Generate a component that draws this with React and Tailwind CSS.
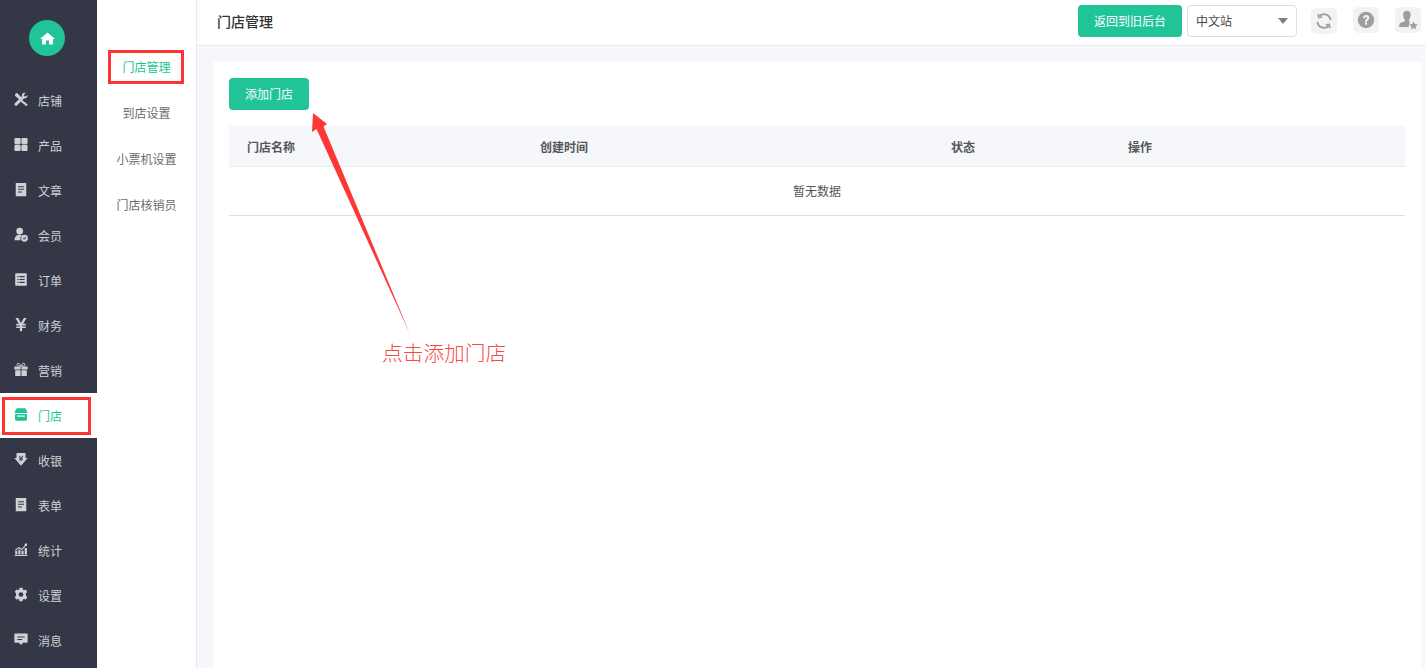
import React from "react";

const F = '"Noto Sans CJK SC", "Liberation Sans", sans-serif';

const S = ({ children }) => (
  <svg width="15" height="15" viewBox="0 0 16 16" fill="currentColor">{children}</svg>
);

const icons = {
  tools: (
    <S>
      <path d="M1.6 1.4 L3.6 .6 L9 6 L6.6 8.4 L1 3.6 Z" />
      <path d="M12 .4 C9.8 .4 8.6 2.2 9.2 4.2 L1 12.2 C.2 13 .3 13.8 1.1 14.6 C1.9 15.4 2.8 15.4 3.6 14.6 L11.6 6.6 C13.7 7.2 15.8 5.6 15.4 2.8 L13 4.9 L11 3.2 L13.2 .7 Z" />
      <path d="M9.2 8.7 L15 13.2 C15.8 14 15.5 14.5 14.9 15 C14.3 15.5 13.8 15.4 13.2 14.8 L7.6 10.3 Z" />
    </S>
  ),
  grid: (
    <S>
      <rect x=".5" y=".5" width="7.1" height="7.1" rx="1.2" />
      <rect x="8.4" y=".5" width="7.1" height="7.1" rx="1.2" />
      <rect x=".5" y="8.4" width="7.1" height="7.1" rx="1.2" />
      <rect x="8.4" y="8.4" width="7.1" height="7.1" rx="1.2" />
    </S>
  ),
  doc: (
    <S>
      <path fillRule="evenodd" d="M2 .6 H14 V15.6 H2 Z M4.6 4.2 V5.3 H11.4 V4.2 Z M4.6 7.2 V8.3 H11.4 V7.2 Z M4.6 10.2 V11.3 H9 V10.2 Z" />
    </S>
  ),
  member: (
    <S>
      <circle cx="6.5" cy="4.2" r="3.8" />
      <path d="M.6 14.6 C.6 10.5 3.2 8.4 6.5 8.4 C7.5 8.4 8.2 8.6 8.9 9 C7.8 10 7.2 11.2 7.2 12.5 C7.2 13.3 7.4 14 7.7 14.6 Z" />
      <path fillRule="evenodd" d="M12 8.4 A3.9 3.9 0 1 0 12 16.2 A3.9 3.9 0 1 0 12 8.4 Z M10.1 12.1 L11.6 14 L14 11 L13.2 10.5 L11.5 12.6 L10.8 11.6 Z" />
    </S>
  ),
  order: (
    <S>
      <path fillRule="evenodd" d="M2.4 .8 H13.6 A1 1 0 0 1 14.6 1.8 V14.2 A1 1 0 0 1 13.6 15.2 H2.4 A1 1 0 0 1 1.4 14.2 V1.8 A1 1 0 0 1 2.4 .8 Z M3.8 4 V5.3 H5.1 V4 Z M6.2 4 V5.3 H12.2 V4 Z M3.8 7.3 V8.6 H5.1 V7.3 Z M6.2 7.3 V8.6 H12.2 V7.3 Z M3.8 10.6 V11.9 H5.1 V10.6 Z M6.2 10.6 V11.9 H12.2 V10.6 Z" />
    </S>
  ),
  yen: (
    <S>
      <path d="M1.6 .6 H4.8 L8 6.2 L11.2 .6 H14.4 L10.4 7.2 H13.4 V9 H9.3 V10.2 H13.4 V12 H9.3 V15.6 H6.7 V12 H2.6 V10.2 H6.7 V9 H2.6 V7.2 H5.6 Z" />
    </S>
  ),
  gift: (
    <S>
      <path d="M.4 4.6 H7.5 V8 H.4 Z M8.5 4.6 H15.6 V8 H8.5 Z M1.4 8.8 H7.5 V15.4 H1.4 Z M8.5 8.8 H14.6 V15.4 H8.5 Z" />
      <path fill="none" stroke="currentColor" strokeWidth="1.1" d="M8 4 C6.5 4 3.8 4.2 3.4 2.8 C3 1.2 4.6 .6 5.6 1.1 C6.8 1.7 7.6 2.9 8 4 C8.4 2.9 9.2 1.7 10.4 1.1 C11.4 .6 13 1.2 12.6 2.8 C12.2 4.2 9.5 4 8 4 Z" />
    </S>
  ),
  store: (
    <S>
      <path d="M3 .8 H13 L15.4 5.4 A1 1 0 0 1 14.4 6.4 H1.6 A1 1 0 0 1 .6 5.4 Z" />
      <path fillRule="evenodd" d="M1.2 7.4 H14.8 V13.6 A1.6 1.6 0 0 1 13.2 15.2 H2.8 A1.6 1.6 0 0 1 1.2 13.6 Z M3.6 9.2 V10.5 H12.4 V9.2 Z" />
    </S>
  ),
  cashier: (
    <S>
      <path fillRule="evenodd" d="M3.6 .6 H12.4 A.8 .8 0 0 1 13.2 1.4 V6.4 H15.6 L8 15 L.4 6.4 H2.8 V1.4 A.8 .8 0 0 1 3.6 .6 Z M6.2 3.6 L8 5.8 L9.8 3.6 L10.6 4.2 L8.8 6.4 H10.2 V7.2 H8.5 V8 H10.2 V8.8 H8.5 V10 H7.5 V8.8 H5.8 V8 H7.5 V7.2 H5.8 V6.4 H7.2 L5.4 4.2 Z" />
    </S>
  ),
  chart: (
    <S>
      <path d="M.8 14.2 H15.4 V15.4 H.8 Z M1.4 9.4 H3.8 V13.6 H1.4 Z M5 8.4 H7.4 V13.6 H5 Z M8.6 9.4 H11 V13.6 H8.6 Z M12.2 6.4 H14.8 V13.6 H12.2 Z" />
      <path d="M1 8.2 L5.6 5.2 L9 7 L12.6 2.8 L11.6 1.8 L15 .8 L14.8 4.2 L13.8 3.6 L9.2 8.6 L5.6 6.8 L1.6 9.2 Z" />
    </S>
  ),
  gear: (
    <S>
      <path fillRule="evenodd" d="M6.3 .2 H9.7 L10.1 2.3 C10.6 2.5 11 2.7 11.4 3 L13.5 2.3 L15.2 5.2 L13.6 6.6 C13.7 7.2 13.7 8.8 13.6 9.4 L15.2 10.8 L13.5 13.7 L11.4 13 C11 13.3 10.6 13.5 10.1 13.7 L9.7 15.8 H6.3 L5.9 13.7 C5.4 13.5 5 13.3 4.6 13 L2.5 13.7 L.8 10.8 L2.4 9.4 C2.3 8.8 2.3 7.2 2.4 6.6 L.8 5.2 L2.5 2.3 L4.6 3 C5 2.7 5.4 2.5 5.9 2.3 Z M8 5.3 A2.7 2.7 0 1 0 8 10.7 A2.7 2.7 0 1 0 8 5.3 Z" />
    </S>
  ),
  msg: (
    <S>
      <path fillRule="evenodd" d="M1.6 1 H14.4 A1.2 1.2 0 0 1 15.6 2.2 V10.6 A1.2 1.2 0 0 1 14.4 11.8 H10.4 L8 14.4 L5.6 11.8 H1.6 A1.2 1.2 0 0 1 .4 10.6 V2.2 A1.2 1.2 0 0 1 1.6 1 Z M3.8 4.6 V5.8 H12.2 V4.6 Z M3.8 7.5 V8.7 H9.4 V7.5 Z" />
    </S>
  ),
};

const nav = [
  ["店铺", "tools"],
  ["产品", "grid"],
  ["文章", "doc"],
  ["会员", "member"],
  ["订单", "order"],
  ["财务", "yen"],
  ["营销", "gift"],
  ["门店", "store", true],
  ["收银", "cashier"],
  ["表单", "doc"],
  ["统计", "chart"],
  ["设置", "gear"],
  ["消息", "msg"],
];

const sub = ["门店管理", "到店设置", "小票机设置", "门店核销员"];

export default function App() {
  return (
    <div className="relative flex h-[668px] w-[1425px] overflow-hidden bg-white text-[12px]" style={{ fontFamily: F }}>
      <aside className="flex h-full w-[97px] shrink-0 flex-col bg-[#343846]">
        <div className="flex h-[78px] shrink-0 items-start justify-center pr-[3px] pt-[20px]">
          <div className="flex h-[36px] w-[36px] items-center justify-center rounded-full bg-[#20c497] text-white">
            <svg width="15" height="15" viewBox="0 0 16 16" fill="currentColor">
              <path d="M8 1.5 L16 8.6 H13.8 V14.5 H9.6 V10.2 H6.4 V14.5 H2.2 V8.6 H0 Z" />
            </svg>
          </div>
        </div>
        {nav.map(([label, icon, active]) => (
          <div
            key={label}
            className={`flex h-[45px] shrink-0 items-center pl-[14px] ${active ? "bg-white text-[#20c497]" : "text-[#cfd1d6]"}`}
          >
            <span className="mr-[10px] -mt-[2px] flex h-[16px] w-[14px] items-center justify-center">{icons[icon]}</span>
            <span className="leading-none">{label}</span>
          </div>
        ))}
      </aside>

      <nav className="flex h-full w-[100px] shrink-0 flex-col border-r border-[#e8e9ee] pt-[44px] text-[#6a6c70]">
        {sub.map((s, i) => (
          <div key={s} className={`flex h-[46px] items-center justify-center ${i === 0 ? "text-[#20c497]" : ""}`}>{s}</div>
        ))}
      </nav>

      <main className="flex h-full min-w-0 flex-1 flex-col bg-[#f6f7fb]">
        <header className="flex h-[46px] shrink-0 items-center border-b border-[#e8e9ee] bg-white pl-[20px]">
          <h1 className="-mt-[2px] text-[14px] font-medium text-[#333]">门店管理</h1>
          <div className="ml-auto flex items-center pr-[4px]">
            <button className="-mt-[3px] h-[32px] w-[104px] rounded-[4px] bg-[#20c497] text-white">返回到旧后台</button>
            <div className="-mt-[3px] ml-[5px] flex h-[32px] w-[110px] items-center justify-between rounded-[4px] border border-[#dcdee2] pl-[8px] pr-[8px] text-[#444]">
              <span>中文站</span>
              <span className="h-0 w-0 border-x-[5px] border-t-[6px] border-x-transparent border-t-[#7d7f84]" />
            </div>
            <div className="-mt-[3px] ml-[14px] flex h-[26px] w-[26px] items-center justify-center rounded-[5px] bg-[#f3f3f4] text-[#9e9ea2]">
              <svg width="18" height="18" viewBox="0 0 18 18" fill="none" stroke="currentColor" strokeWidth="1.9">
                <path d="M15.6 8 A6.7 6.7 0 0 0 4.4 4" />
                <path d="M2.4 10 A6.7 6.7 0 0 0 13.6 14" />
                <path d="M3.2 1.8 L3.6 5.6 L7.2 5" strokeWidth="1.5" />
                <path d="M14.8 16.2 L14.4 12.4 L10.8 13" strokeWidth="1.5" />
              </svg>
            </div>
            <div className="-mt-[5px] ml-[16px] flex h-[26px] w-[26px] items-center justify-center rounded-[5px] bg-[#f3f3f4] text-[#9e9ea2]">
              <svg width="18" height="18" viewBox="0 0 18 18">
                <circle cx="9" cy="9" r="8.2" fill="currentColor" />
                <path d="M6 7 C6.1 5 7.4 4 9.1 4 C11 4 12.3 5.2 12.3 6.9 C12.3 9 9.9 9.1 10 10.9 H8 C7.8 8.4 10 8.2 10 7 C10 6.4 9.7 6 9.1 6 C8.4 6 8.1 6.4 8 7.2 Z" fill="#f3f3f4" />
                <rect x="8" y="11.6" width="2.1" height="2.1" fill="#f3f3f4" />
              </svg>
            </div>
            <div className="-mt-[5px] ml-[16px] flex h-[26px] w-[26px] shrink-0 items-center justify-center rounded-[5px] bg-[#f3f3f4] text-[#9e9ea2]">
              <svg width="20" height="20" viewBox="0 0 18 18" fill="currentColor">
                <path d="M8 .6 C10.4 .6 11.6 2.4 11.4 4.8 C11.2 6.9 10.5 8.2 9.8 9 V10.2 L11 10.8 C10 11.8 9.7 13.2 9.8 15.4 H1 C1 12.8 1.6 11.6 3.5 11 L6.2 10.2 V9 C5.5 8.2 4.8 6.9 4.6 4.8 C4.4 2.4 5.6 .6 8 .6 Z" />
                <path d="M14 10.2 L15.1 12.7 L17.8 13 L15.8 14.8 L16.4 17.5 L14 16.1 L11.6 17.5 L12.2 14.8 L10.2 13 L12.9 12.7 Z" />
              </svg>
            </div>
          </div>
        </header>

        <section className="mt-[16px] ml-[16px] mr-[3px] min-h-0 flex-1 bg-white p-[16px]">
          <button className="h-[32px] w-[80px] rounded-[4px] bg-[#20c497] text-white">添加门店</button>
          <table className="mt-[16px] w-[1176px] table-fixed border-collapse text-left">
            <thead>
              <tr className="h-[40px] border-b border-[#e8e9ee] bg-[#f6f7fb] text-[#55565a]">
                <th className="w-[293px] pl-[18px] pt-[2px] font-bold">门店名称</th>
                <th className="w-[411px] pl-[18px] pt-[2px] font-bold">创建时间</th>
                <th className="w-[177px] pl-[18px] pt-[2px] font-bold">状态</th>
                <th className="pl-[18px] pt-[2px] font-bold">操作</th>
              </tr>
            </thead>
            <tbody>
              <tr className="h-[49px] border-b border-[#e0e0e2]">
                <td colSpan={4} className="text-center text-[#55565a]">暂无数据</td>
              </tr>
            </tbody>
          </table>
        </section>
      </main>

      {/* annotations */}
      <div className="absolute left-[2px] top-[397px] h-[38px] w-[89px] border-[3px] border-[#fd3434]" />
      <div className="absolute left-[108px] top-[50px] h-[34px] w-[76px] border-[3px] border-[#fd3434]" />
      <svg className="absolute left-[300px] top-[100px]" width="120" height="240" viewBox="0 0 120 240">
        <path d="M13 13 L27 24 L23.5 26.5 L110 234 L16.5 29 L12 32 Z" fill="#fd3636" />
      </svg>
      <span className="absolute left-[382px] top-[337px] text-[20.7px] font-light leading-[30px] text-[#f44a4a]">点击添加门店</span>
    </div>
  );
}
